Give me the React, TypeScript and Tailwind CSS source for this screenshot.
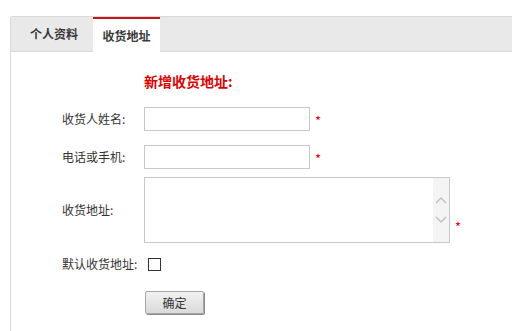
import React from "react";

const font = "font-['Microsoft_YaHei','Noto_Sans_CJK_SC','Noto_Sans',sans-serif]";

function Star({ className = "" }: { className?: string }) {
  return <span className={`text-[13px] leading-[12px] text-[#e60012] ${className}`}>*</span>;
}

export default function App() {
  return (
    <div className={`w-[512px] h-[331px] overflow-hidden bg-white ${font} text-[#333]`}>
      <div className="ml-[10px] mt-[16px] w-[530px] border-t border-l border-b border-[#d9d9d9] rounded-tl-[3px]">
        {/* tab bar */}
        <div className="h-[35px] bg-[#e9e9e9] border-b border-[#d9d9d9] flex items-stretch rounded-tl-[3px]">
          <div className="w-[82px] flex items-center pl-[19px] text-[12px] font-semibold text-[#3a3a3a]">个人资料</div>
          <div className="w-[67px] -mb-[1px] bg-white border-t-2 border-[#c4161c] flex items-center justify-center text-[12px] font-semibold text-[#3a3a3a]">
            收货地址
          </div>
        </div>
        {/* content */}
        <div className="pl-[51px] pt-[20px] pb-[17px] grid grid-cols-[82px_1fr] text-[12px]">
          <div />
          <div className="text-[14px] leading-[18px] font-bold text-[#e00000]">新增收货地址:</div>

          <div className="mt-[17px] flex items-center h-[24px]">收货人姓名:</div>
          <div className="mt-[17px] flex items-start">
            <div className="w-[166px] h-[24px] border border-[#c8c8c8] bg-white" />
            <Star className="ml-[5px] mt-[8px]" />
          </div>

          <div className="mt-[14px] flex items-center h-[24px]">电话或手机:</div>
          <div className="mt-[14px] flex items-start">
            <div className="w-[166px] h-[24px] border border-[#c8c8c8] bg-white" />
            <Star className="ml-[5px] mt-[8px]" />
          </div>

          <div className="mt-[8px] flex items-center h-[66px]">收货地址:</div>
          <div className="mt-[8px] flex items-end">
            <div className="w-[306px] h-[66px] border border-[#c8c8c8] bg-white flex">
              <div className="flex-1" />
              <div className="w-[16px] bg-[#f4f4f4] flex flex-col items-center justify-center gap-[12px]">
                <svg width="12" height="8" viewBox="0 0 12 8">
                  <path d="M1 7 L6 2 L11 7" fill="none" stroke="#c2c2c2" strokeWidth="1.5" />
                </svg>
                <svg width="12" height="8" viewBox="0 0 12 8">
                  <path d="M1 1 L6 6 L11 1" fill="none" stroke="#c2c2c2" strokeWidth="1.5" />
                </svg>
              </div>
            </div>
            <Star className="ml-[5px] mb-[10px]" />
          </div>

          <div className="mt-[14px] flex items-center h-[14px] whitespace-nowrap">默认收货地址:</div>
          <div className="mt-[14px] flex items-center h-[14px]">
            <div className="ml-[4px] w-[13px] h-[13px] border border-[#333] bg-white" />
          </div>

          <div />
          <div className="mt-[20px]">
            <button className="ml-[1px] w-[59px] h-[23px] border border-[#a6a6a6] rounded-[2px] bg-gradient-to-b from-[#f2f2f2] to-[#dadada] shadow-[1px_1px_0_#8a8a8a] text-[12px] text-[#333] flex items-center justify-center">
              确定
            </button>
          </div>
        </div>
      </div>
    </div>
  );
}
